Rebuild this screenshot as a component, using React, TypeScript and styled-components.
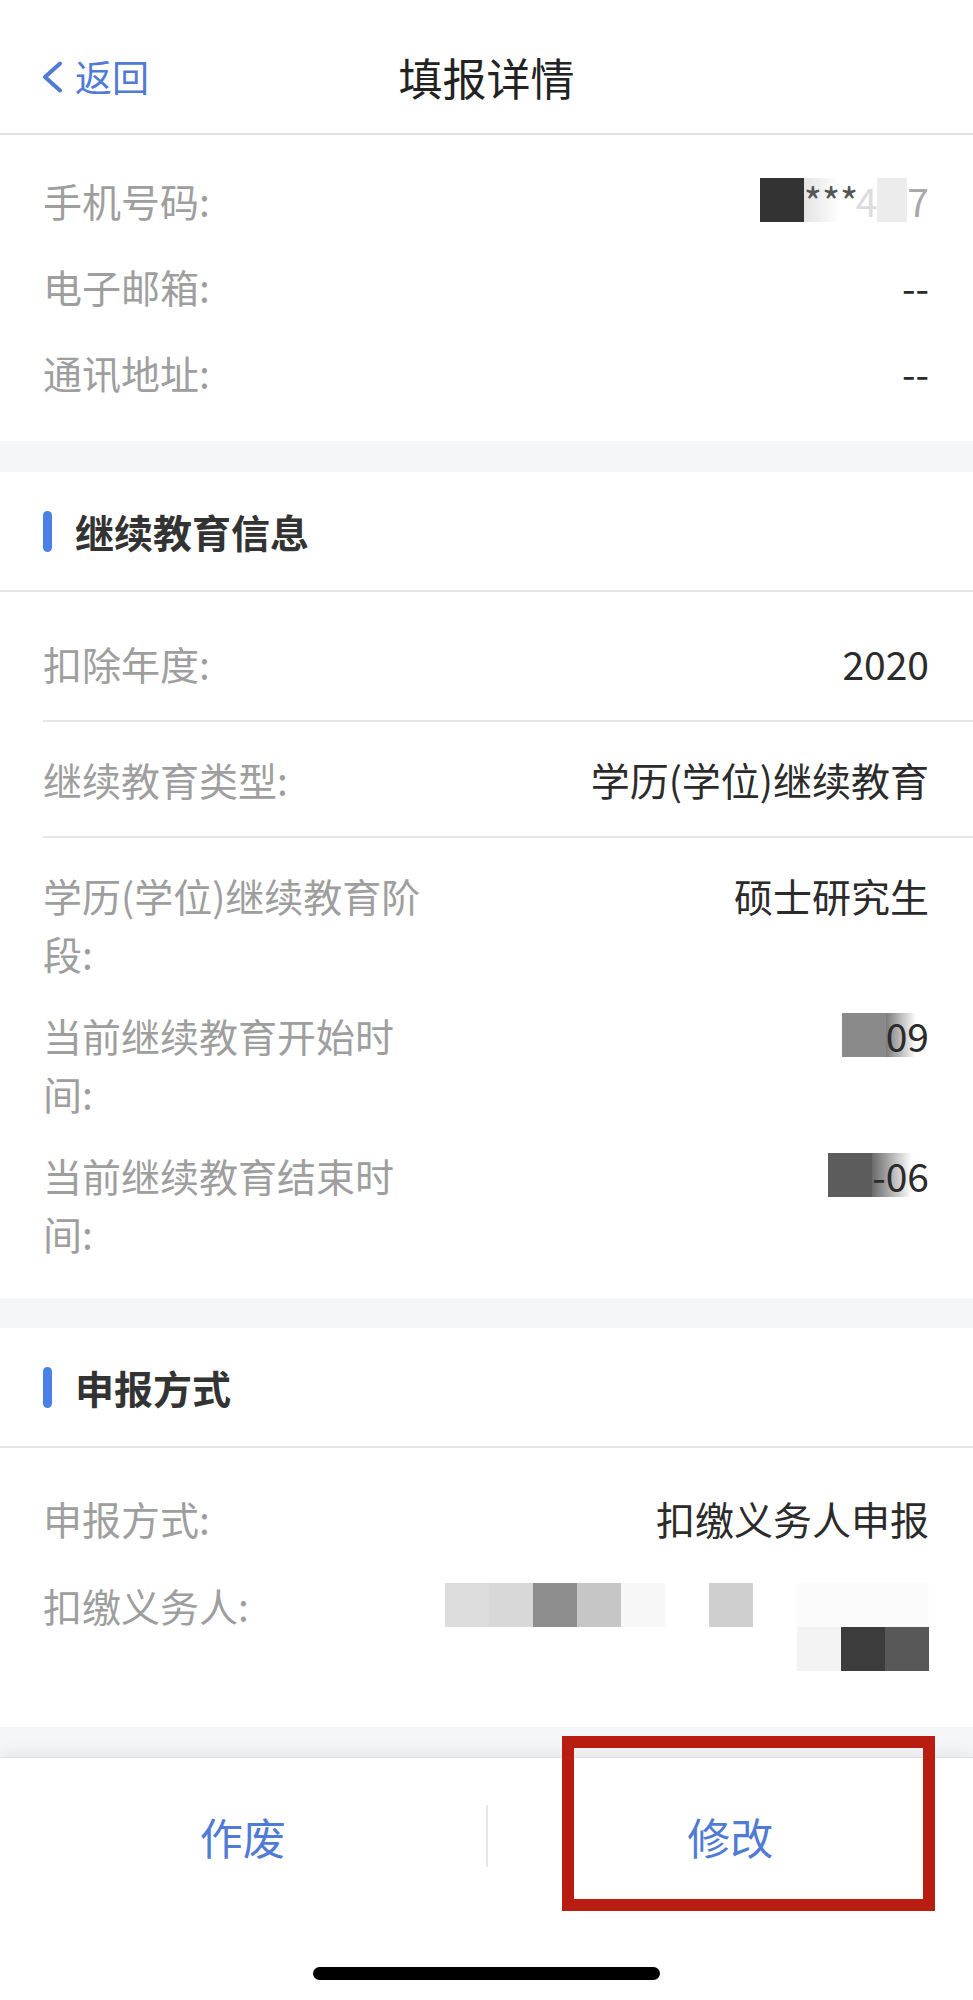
import React from "react";
import styled, { createGlobalStyle } from "styled-components";

const GlobalStyle = createGlobalStyle`
  html, body {
    margin: 0;
    padding: 0;
    background: #ffffff;
  }
  body {
    font-family: "Noto Sans CJK SC", "Noto Sans", "Liberation Sans", sans-serif;
    -webkit-font-smoothing: antialiased;
  }
  * { box-sizing: border-box; }
`;

const Screen = styled.div`
  width: 973px;
  background: #f5f6f8;
  display: flex;
  flex-direction: column;
`;

const NavBar = styled.header`
  height: 135px;
  padding-top: 20px;
  background: #ffffff;
  border-bottom: 2px solid #e0e0e0;
  display: grid;
  grid-template-columns: 1fr auto 1fr;
  align-items: center;
`;

const BackButton = styled.button`
  justify-self: start;
  display: flex;
  align-items: center;
  gap: 12px;
  margin-left: 41px;
  padding: 0;
  border: none;
  background: none;
  color: #4f7ad6;
  font-family: inherit;
  font-size: 37px;
  line-height: 1;
`;

const Title = styled.h1`
  margin: 0;
  font-size: 44px;
  font-weight: 400;
  color: #222222;
  line-height: 1;
`;

const Section = styled.section<{ $mt?: number }>`
  background: #ffffff;
  margin-top: ${(p) => p.$mt ?? 0}px;
`;

const SectionHeader = styled.div`
  height: 120px;
  padding-left: 43px;
  display: flex;
  align-items: center;
  gap: 23px;
  border-bottom: 2px solid #e6e6e6;
`;

const Bar = styled.span`
  width: 9px;
  height: 41px;
  border-radius: 5px;
  background: #4b80e6;
`;

const SectionTitle = styled.h2`
  margin: 0;
  font-size: 39px;
  font-weight: 700;
  color: #333333;
  line-height: 1;
`;

const InfoList = styled.div<{ $pt: number; $pb: number; $gap: number }>`
  display: flex;
  flex-direction: column;
  gap: ${(p) => p.$gap}px;
  padding: ${(p) => p.$pt}px 44px ${(p) => p.$pb}px 43px;
`;

const CellList = styled.div`
  padding-top: 14px;
`;

const Cell = styled.div`
  margin-left: 43px;
  padding: 28px 44px 28px 0;
  border-bottom: 2px solid #e6e6e6;
  display: flex;
  justify-content: space-between;
  align-items: flex-start;
`;

const Row = styled.div`
  display: flex;
  justify-content: space-between;
  align-items: flex-start;
`;

const Label = styled.div`
  width: 386px;
  flex-shrink: 0;
  font-size: 39px;
  line-height: 58px;
  color: #9e9e9e;
`;

const Value = styled.div`
  display: flex;
  align-items: center;
  justify-content: flex-end;
  min-height: 58px;
  font-size: 39px;
  line-height: 58px;
  color: #2b2b2b;
  text-align: right;
`;

const Block = styled.span<{ $c: string; $w?: number }>`
  display: inline-block;
  width: ${(p) => p.$w ?? 44}px;
  height: 44px;
  background: ${(p) => p.$c};
`;

const Faded = styled.span<{ $from: string; $color?: string; $w?: number }>`
  display: inline-flex;
  align-items: center;
  height: 44px;
  ${(p) => (p.$w ? `width: ${p.$w}px;` : "")}
  background: linear-gradient(90deg, ${(p) => p.$from} 0%, rgba(255, 255, 255, 0) 70%);
  color: ${(p) => p.$color ?? "#2b2b2b"};
`;

const Soft = styled.span<{ $color: string }>`
  color: ${(p) => p.$color};
`;

const MosaicValue = styled.div`
  height: 116px;
  padding-top: 7px;
`;

const Mosaic = styled.div`
  display: grid;
  grid-template-columns: repeat(11, 44px);
  grid-auto-rows: 44px;
  filter: blur(0.6px);
`;

const Cellblock = styled.span<{ $c: string }>`
  background: ${(p) => p.$c};
`;

const Footer = styled.footer`
  position: relative;
  margin-top: 30px;
  background: #ffffff;
  border-top: 1px solid #dedede;
  box-shadow: 0 -6px 12px rgba(0, 0, 0, 0.05);
  display: flex;
  flex-direction: column;
  align-items: center;
`;

const ButtonRow = styled.div`
  width: 100%;
  height: 155px;
  display: flex;
  align-items: center;
`;

const FooterButton = styled.button`
  flex: 1;
  height: 100%;
  border: none;
  background: none;
  padding: 0;
  font-family: inherit;
  font-size: 43px;
  color: #4f7ad6;
`;

const Separator = styled.span`
  width: 2px;
  height: 62px;
  background: #e8e8e8;
`;

const HomeArea = styled.div`
  height: 87px;
  padding-top: 54px;
`;

const HomeIndicator = styled.div`
  width: 347px;
  height: 13px;
  border-radius: 7px;
  background: #000000;
`;

const Highlight = styled.div`
  position: absolute;
  left: 562px;
  top: -22px;
  width: 373px;
  height: 175px;
  border: 12px solid #b91c10;
  pointer-events: none;
`;

const Chevron = () => (
  <svg width="22" height="32" viewBox="0 0 22 32" fill="none">
    <path d="M19 2.5 L4 16 L19 29.5" stroke="#4f7ad6" strokeWidth="4" strokeLinecap="round" strokeLinejoin="round" />
  </svg>
);

const mosaicRows: string[][] = [
  ["#dcdcdc", "#d8d8d8", "#8e8e8e", "#c6c6c6", "#f7f7f7", "#ffffff", "#cfcfcf", "#ffffff", "#fbfbfb", "#fbfbfb", "#fbfbfb"],
  ["#ffffff", "#ffffff", "#ffffff", "#ffffff", "#ffffff", "#ffffff", "#ffffff", "#ffffff", "#f3f3f3", "#3c3c3c", "#585858"],
];

export default function App() {
  return (
    <>
      <GlobalStyle />
      <Screen>
        <NavBar>
          <BackButton>
            <Chevron />
            返回
          </BackButton>
          <Title>填报详情</Title>
          <span />
        </NavBar>

        <Section>
          <InfoList $pt={36} $pb={40} $gap={28}>
            <Row>
              <Label>手机号码:</Label>
              <Value>
                <Block $c="#333333" />
                <Faded $from="#e4e4e4" $color="#555555" $w={52}>***</Faded>
                <Soft $color="#dcdcdc">4</Soft>
                <Block $c="#ececec" $w={30} />
                <Soft $color="#a8a8a8">7</Soft>
              </Value>
            </Row>
            <Row>
              <Label>电子邮箱:</Label>
              <Value>--</Value>
            </Row>
            <Row>
              <Label>通讯地址:</Label>
              <Value>--</Value>
            </Row>
          </InfoList>
        </Section>

        <Section $mt={31}>
          <SectionHeader>
            <Bar />
            <SectionTitle>继续教育信息</SectionTitle>
          </SectionHeader>
          <CellList>
            <Cell>
              <Label>扣除年度:</Label>
              <Value>2020</Value>
            </Cell>
            <Cell>
              <Label>继续教育类型:</Label>
              <Value>学历(学位)继续教育</Value>
            </Cell>
          </CellList>
          <InfoList $pt={28} $pb={36} $gap={24}>
            <Row>
              <Label>学历(学位)继续教育阶段:</Label>
              <Value>硕士研究生</Value>
            </Row>
            <Row>
              <Label>当前继续教育开始时间:</Label>
              <Value>
                <Block $c="#8a8a8a" />
                <Faded $from="#7c7c7c">09</Faded>
              </Value>
            </Row>
            <Row>
              <Label>当前继续教育结束时间:</Label>
              <Value>
                <Block $c="#5c5c5c" />
                <Faded $from="#6a6a6a">-06</Faded>
              </Value>
            </Row>
          </InfoList>
        </Section>

        <Section $mt={30}>
          <SectionHeader>
            <Bar />
            <SectionTitle>申报方式</SectionTitle>
          </SectionHeader>
          <InfoList $pt={41} $pb={35} $gap={29}>
            <Row>
              <Label>申报方式:</Label>
              <Value>扣缴义务人申报</Value>
            </Row>
            <Row>
              <Label>扣缴义务人:</Label>
              <MosaicValue>
                <Mosaic>
                  {mosaicRows.flatMap((row, r) =>
                    row.map((c, i) => <Cellblock key={`${r}-${i}`} $c={c} />)
                  )}
                </Mosaic>
              </MosaicValue>
            </Row>
          </InfoList>
        </Section>

        <Footer>
          <Highlight />
          <ButtonRow>
            <FooterButton>作废</FooterButton>
            <Separator />
            <FooterButton>修改</FooterButton>
          </ButtonRow>
          <HomeArea>
            <HomeIndicator />
          </HomeArea>
        </Footer>
      </Screen>
    </>
  );
}
